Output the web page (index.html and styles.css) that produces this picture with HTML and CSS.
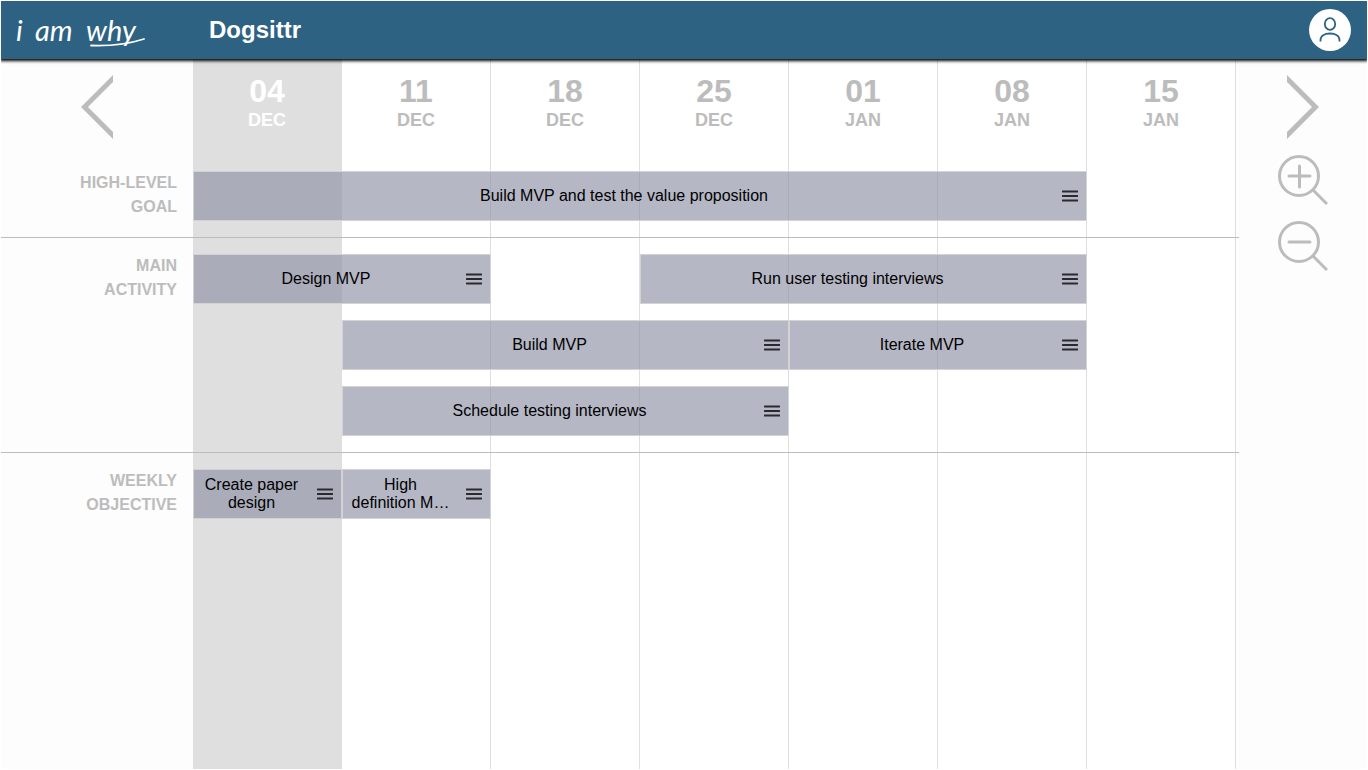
FILE: index.html
```html
<!DOCTYPE html>
<html lang="en">
<head>
    <meta charset="UTF-8">
    <title>Dogsittr - i am why</title>
    <link rel="stylesheet" href="styles.css">
</head>
<body>
<svg class="defs" width="0" height="0" aria-hidden="true">
    <symbol id="menu" viewBox="0 0 16 12">
        <path d="M0.500 1.500h15M0.500 6h15M0.500 10.500h15" stroke="#2a2a2e" stroke-width="1.900" stroke-linecap="round"/>
    </symbol>
</svg>
<header class="topbar">
    <a class="logo" href="#" aria-label="i am why">
        <svg width="136" height="44" viewBox="0 0 136 44">
            <g class="logo-text">
                <text x="1" y="33">i</text>
                <text x="20" y="33">am</text>
                <text x="71" y="33">why</text>
            </g>
            <path d="M76 37.500C91 38 112 36.500 129 31" fill="none" stroke="#fff" stroke-width="1.800" stroke-linecap="round"/>
        </svg>
    </a>
    <h1>Dogsittr</h1>
    <button class="user" aria-label="Account">
        <svg width="42" height="42" viewBox="0 0 42 42" fill="none" stroke="#2e6283" stroke-width="1.8">
            <ellipse cx="21" cy="15" rx="5.200" ry="5.800"/>
            <path d="M11.500 32.500v-1.500c0-4 4-6.500 9.500-6.500s9.500 2.500 9.500 6.500v1.500"/>
        </svg>
    </button>
</header>
<main class="board">
    <div class="side left">
        <button class="prev" aria-label="Previous">
            <svg width="32" height="64" viewBox="0 0 32 64"><path d="M32 0v7L7 32l25 25v7L0 32z" fill="#bcbcbc"/></svg>
        </button>
    </div>
    <div class="weeks">
        <div class="week current"><b>04</b><span>DEC</span></div>
        <div class="week"><b>11</b><span>DEC</span></div>
        <div class="week"><b>18</b><span>DEC</span></div>
        <div class="week"><b>25</b><span>DEC</span></div>
        <div class="week"><b>01</b><span>JAN</span></div>
        <div class="week"><b>08</b><span>JAN</span></div>
        <div class="week"><b>15</b><span>JAN</span></div>
    </div>
    <div class="side right">
        <button class="next" aria-label="Next">
            <svg width="32" height="64" viewBox="0 0 32 64"><path d="M0 0v7l25 25L0 57v7l32-32z" fill="#bcbcbc"/></svg>
        </button>
        <button aria-label="Zoom in">
            <svg width="50" height="50" viewBox="0 0 50 50" fill="none" stroke="#bcbcbc" stroke-width="3">
                <circle cx="21" cy="21" r="19.500"/>
                <path d="M35 35l14 14"/>
                <path d="M11 21h21M21.500 11v21" stroke-linecap="round"/>
            </svg>
        </button>
        <button aria-label="Zoom out">
            <svg width="50" height="50" viewBox="0 0 50 50" fill="none" stroke="#bcbcbc" stroke-width="3">
                <circle cx="21" cy="21" r="19.500"/>
                <path d="M35 35l14 14"/>
                <path d="M11 21h21" stroke-linecap="round"/>
            </svg>
        </button>
    </div>
    <div class="rows">
        <section class="row">
            <h2>HIGH-LEVEL<br>GOAL</h2>
            <div class="bar from1 span6"><p>Build MVP and test the value proposition</p><button aria-label="Menu"><svg><use href="#menu"/></svg></button></div>
        </section>
        <section class="row">
            <h2>MAIN<br>ACTIVITY</h2>
            <div class="bar from1 span2"><p>Design MVP</p><button aria-label="Menu"><svg><use href="#menu"/></svg></button></div>
            <div class="bar from4 span3"><p>Run user testing interviews</p><button aria-label="Menu"><svg><use href="#menu"/></svg></button></div>
            <div class="bar from2 span3"><p>Build MVP</p><button aria-label="Menu"><svg><use href="#menu"/></svg></button></div>
            <div class="bar from5 span2"><p>Iterate MVP</p><button aria-label="Menu"><svg><use href="#menu"/></svg></button></div>
            <div class="bar from2 span3"><p>Schedule testing interviews</p><button aria-label="Menu"><svg><use href="#menu"/></svg></button></div>
        </section>
        <section class="row">
            <h2>WEEKLY<br>OBJECTIVE</h2>
            <div class="bar from1 span1"><p>Create paper design</p><button aria-label="Menu"><svg><use href="#menu"/></svg></button></div>
            <div class="bar from2 span1"><p>High definition M…</p><button aria-label="Menu"><svg><use href="#menu"/></svg></button></div>
        </section>
    </div>
</main>
</body>
</html>
```
FILE: styles.css
```css
*{
    margin: 0;
    padding: 0;
    box-sizing: border-box;
}
body{
    display: flex;
    flex-direction: column;
    min-height: 100vh;
    padding: 1px;
    background: #fff;
    font: 16px/18px "Liberation Sans", Arial, sans-serif;
}
button{
    border: 0;
    background: none;
    cursor: pointer;
}
svg{
    display: block;
}
.defs{
    display: none;
}

/* top bar */
.topbar{
    position: relative;
    z-index: 2;
    display: flex;
    align-items: center;
    height: 58px;
    padding: 0 16px 0 14px;
    background: #2e6283;
    box-shadow: 0 1px 3px 1px #000;
    clip-path: inset(0 0 -8px 0);
    color: #fff;
}
.logo{
    width: 194px;
}
.logo-text{
    fill: #fff;
    font: italic 29px Lato, sans-serif;
}
.topbar h1{
    flex: 1;
    font-size: 24px;
    line-height: 28px;
}
.user{
    border-radius: 50%;
    background: #fff;
}

/* board */
.board{
    flex: 1;
    display: grid;
    grid-template-columns: 192px 1fr 131px;
}
.side{
    grid-row: 1;
    display: flex;
    flex-direction: column;
    align-items: center;
    gap: 16px;
    padding-top: 16px;
    background: #fdfdfd;
}
.left{
    grid-column: 1;
}
.right{
    grid-column: 3;
    padding-left: 2px;
}
.weeks{
    grid-area: 1 / 2;
    display: grid;
    grid-template-columns: repeat(7, 1fr);
}
.week{
    padding-top: 14px;
    border-right: 1px solid #dfdfdf;
    color: #bcbcbc;
    font-weight: bold;
    text-align: center;
}
.week b{
    display: block;
    font-size: 32px;
    line-height: 36px;
}
.week span{
    display: block;
    font-size: 18px;
    line-height: 22px;
}
.week.current{
    background: #dfdfdf;
    color: #fff;
}

/* rows lie over the week columns, the dividers stick out a little */
.rows{
    grid-area: 1 / 1 / 2 / 3;
    z-index: 1;
    align-self: start;
    margin: 96px -3px 0 0;
}
.row{
    display: grid;
    grid-template-columns: 192px repeat(7, 1fr);
    grid-auto-rows: 50px;
    row-gap: 16px;
    padding: 16px 3px 16px 0;
    border-bottom: 1px solid #bcbcbc;
}
.row:last-child{
    border-bottom: 0;
}
.row h2{
    grid-column: 1;
    padding-right: 16px;
    color: #bcbcbc;
    font-size: 16px;
    line-height: 24px;
    text-align: right;
}
.bar{
    display: flex;
    align-items: center;
    border: 1px solid #d3d3d3;
    background: rgba(140, 143, 165, .64);
    background-clip: padding-box;
}
.bar p{
    flex: 1;
    padding: 0 8px;
    text-align: center;
}
.bar button{
    width: 32px;
    padding: 0 8px;
}
.bar svg{
    width: 16px;
    height: 12px;
}
.from1{ grid-column-start: 2; }
.from2{ grid-column-start: 3; }
.from4{ grid-column-start: 5; }
.from5{ grid-column-start: 6; }
.span1{ grid-column-end: span 1; }
.span2{ grid-column-end: span 2; }
.span3{ grid-column-end: span 3; }
.span6{ grid-column-end: span 6; }
```
